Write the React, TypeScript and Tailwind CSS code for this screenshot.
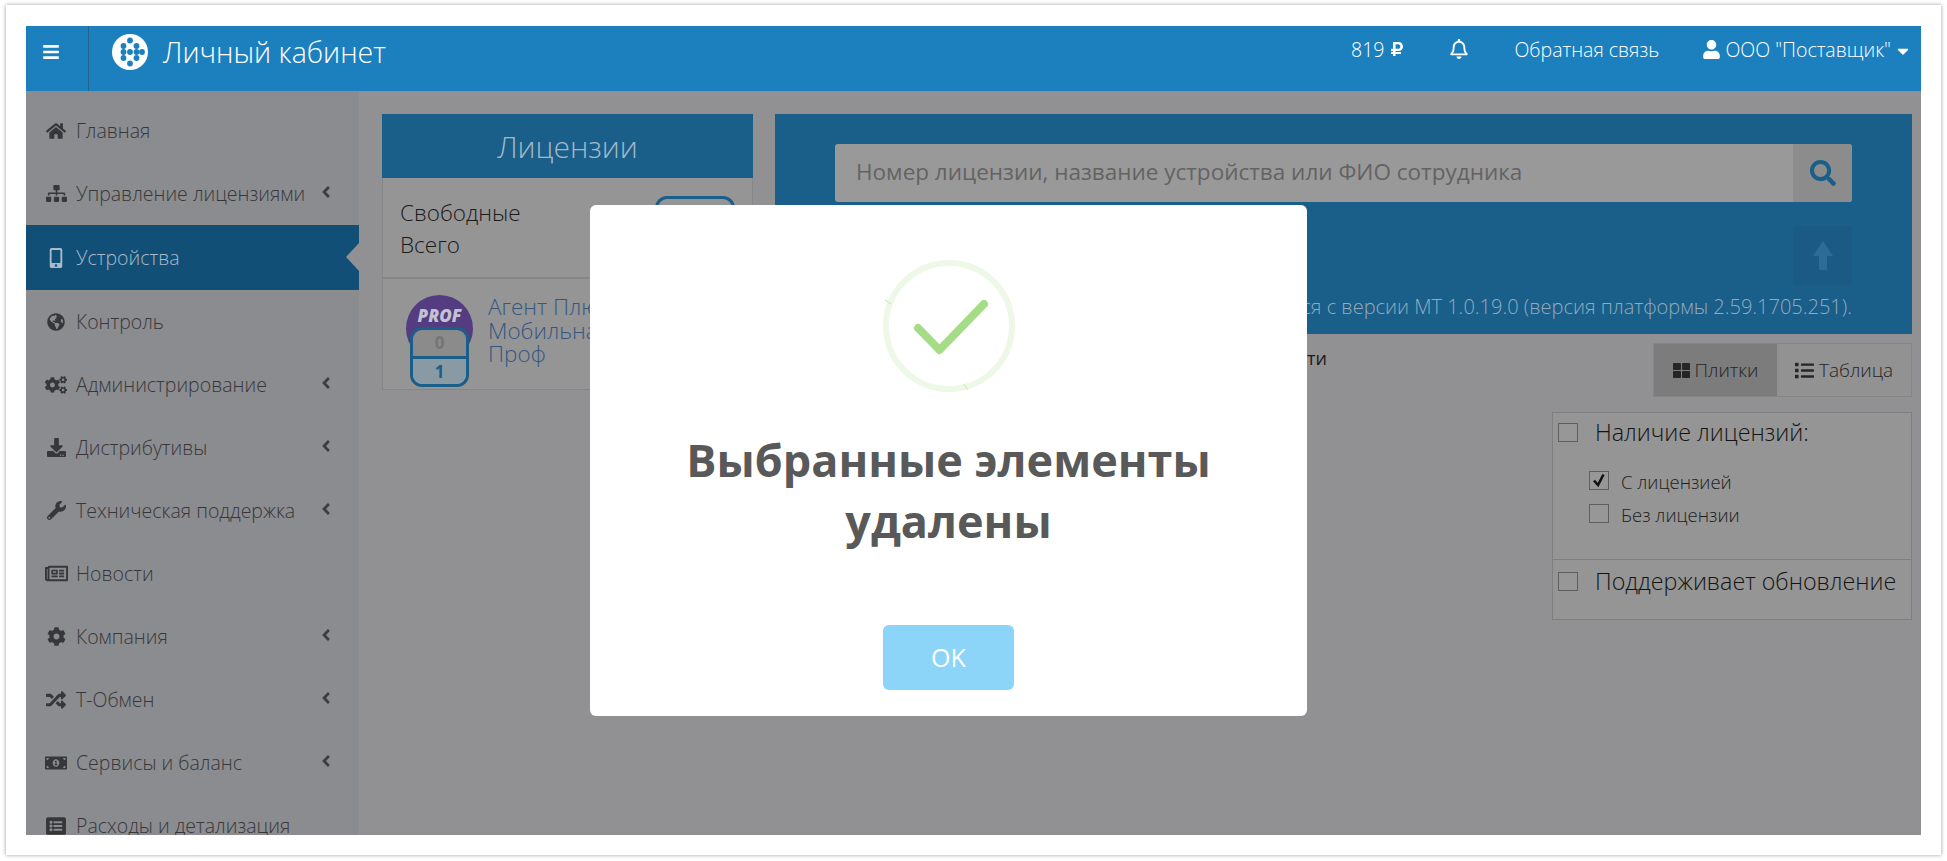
import type { ReactNode } from "react";
import {
  FaAngleLeft,
  FaBars,
  FaCaretDown,
  FaCog,
  FaCogs,
  FaDownload,
  FaGlobeAmericas,
  FaHome,
  FaList,
  FaListAlt,
  FaMobileAlt,
  FaMoneyBillAlt,
  FaRandom,
  FaRegBell,
  FaRegNewspaper,
  FaRubleSign,
  FaSearch,
  FaSitemap,
  FaThLarge,
  FaUser,
  FaWrench,
} from "react-icons/fa";

const menu = [
  { label: "Главная", icon: <FaHome size={20} /> },
  { label: "Управление лицензиями", icon: <FaSitemap size={21} />, more: true },
  { label: "Устройства", icon: <FaMobileAlt size={20} />, active: true },
  { label: "Контроль", icon: <FaGlobeAmericas size={18} /> },
  { label: "Администрирование", icon: <FaCogs size={22} />, more: true },
  { label: "Дистрибутивы", icon: <FaDownload size={19} />, more: true },
  { label: "Техническая поддержка", icon: <FaWrench size={19} />, more: true },
  { label: "Новости", icon: <FaRegNewspaper size={23} /> },
  { label: "Компания", icon: <FaCog size={19} />, more: true },
  { label: "Т-Обмен", icon: <FaRandom size={20} />, more: true },
  { label: "Сервисы и баланс", icon: <FaMoneyBillAlt size={22} />, more: true },
  { label: "Расходы и детализация", icon: <FaListAlt size={20} /> },
];

function Logo() {
  const dots = [
    [18, 6.5],
    [11.5, 12],
    [24.5, 12],
    [11.5, 18],
    [18, 18],
    [24.5, 18],
    [30, 18],
    [11.5, 24],
    [24.5, 24],
    [18, 29.5],
  ];
  return (
    <svg width="36" height="36" viewBox="0 0 36 36">
      <circle cx="18" cy="18" r="18" fill="#ffffff" />
      {dots.map(([cx, cy]) => (
        <circle key={`${cx}-${cy}`} cx={cx} cy={cy} r="2.9" fill="#1c80bf" />
      ))}
    </svg>
  );
}

function SuccessIcon() {
  return (
    <svg width="132" height="132" viewBox="0 0 132 132">
      <circle cx="66" cy="66" r="63" fill="none" stroke="#edf8e7" strokeWidth="6" />
      <path d="M2 40 L8 44" stroke="#c4e9ad" strokeWidth="1" />
      <path d="M81 124 L85 130" stroke="#c4e9ad" strokeWidth="1" />
      <path
        d="M35 68 L56.5 90 L101 44"
        fill="none"
        stroke="#a5dc86"
        strokeWidth="8"
        strokeLinecap="round"
        strokeLinejoin="round"
      />
    </svg>
  );
}

function UploadArrow() {
  return (
    <svg width="20" height="29" viewBox="0 0 20 29" fill="currentColor">
      <path d="M10 0 L20 15 L14 15 L14 29 L6 29 L6 15 L0 15 Z" />
    </svg>
  );
}

function Box({ checked, className = "" }: { checked?: boolean; className?: string }) {
  return (
    <span
      className={`relative block h-[19px] w-[20px] shrink-0 border border-[#5f5f60] bg-[#979797] ${className}`}
    >
      {checked && (
        <svg className="absolute top-0 left-0" width="18" height="17" viewBox="0 0 18 17">
          <path
            d="M4 8.5 L8 13 L13.5 2.5"
            fill="none"
            stroke="#111111"
            strokeWidth="2.6"
          />
        </svg>
      )}
    </span>
  );
}

function Filter({ title, children, className = "" }: { title: string; children?: ReactNode; className?: string }) {
  return (
    <div className={`border border-[#7f7f80] bg-[#959595] ${className}`}>
      <div className="flex items-center pl-[5px]">
        <Box />
        <span className="ml-[17px] text-[23.3px] leading-[26px] font-light whitespace-nowrap text-[#141414]">{title}</span>
      </div>
      {children}
    </div>
  );
}

function Header() {
  return (
    <header className="flex h-[65px] shrink-0 bg-[#1c80bf] text-white">
      <div className="flex w-[63px] items-start justify-center border-r border-[#24618c] pt-[17px]">
        <FaBars size={18} className="-ml-[12px]" />
      </div>
      <div className="ml-[23px] flex items-start pt-[8px]">
        <Logo />
        <span className="ml-[15px] text-[28.5px] leading-[36px] font-light">Личный кабинет</span>
      </div>
      <div className="ml-auto flex items-start pt-[11px] pr-[9px] text-[19.5px] leading-[26px] font-light">
        <span>819</span>
        <FaRubleSign size={16} className="mt-[4px] ml-[5px]" />
        <FaRegBell size={20} className="mt-[2px] ml-[44px]" />
        <span className="ml-[45px]">Обратная связь</span>
        <FaUser size={19} className="mt-[3px] ml-[43px]" />
        <span className="ml-[4px]">ООО "Поставщик"</span>
        <FaCaretDown size={18} className="mt-[5px] ml-[3px]" />
      </div>
    </header>
  );
}

function Sidebar() {
  return (
    <aside className="w-[333px] shrink-0 bg-[#8b8c8f] pt-[8.4px] text-[19.5px] font-light text-[#37373a]">
      {menu.map((item) => (
        <div
          key={item.label}
          className={`relative flex items-center gap-[6px] pl-[16px] ${item.active ? "h-[65px] bg-[#124f77] text-[#a9bac8]" : "h-[63px]"}`}
        >
          <span className="flex w-[28px] justify-center">{item.icon}</span>
          <span className="whitespace-nowrap">{item.label}</span>
          {item.more && (
            <FaAngleLeft size={18} className="absolute top-[21px] left-[291px] text-[#3d3d40]" />
          )}
          {item.active && (
            <span className="absolute top-[18px] right-0 h-0 w-0 border-y-[14px] border-r-[13px] border-y-transparent border-r-[#919193]" />
          )}
        </div>
      ))}
    </aside>
  );
}

function LicensesPanel() {
  return (
    <section className="w-[371px] shrink-0">
      <h2 className="flex h-[64px] items-center justify-center bg-[#1a5e8a] text-[30px] font-light text-[#a3b9c8]">
        Лицензии
      </h2>
      <div className="relative h-[101px] border-x border-b-2 border-[#868686] bg-[#959595] pt-[19px] pl-[17px] text-[22.5px] leading-[32px] font-light text-[#1a1a1a]">
        <p>Свободные</p>
        <p>Всего</p>
        <span className="absolute top-[18px] left-[272px] h-[60px] w-[80px] rounded-[12px] border-[3px] border-[#1a5e8a]" />
      </div>
      <div className="flex h-[111px] border-x border-b border-[#868686] bg-[#959595]">
        <div className="relative ml-[23px] h-[110px] w-[67px] shrink-0">
          <div className="mt-[16px] flex h-[67px] w-[67px] justify-center rounded-full bg-[#533c80] pt-[9px] text-[17px] leading-[24px] font-extrabold text-[#c5c1d2] italic">
            PROF
          </div>
          <div className="absolute top-[48px] left-[4px] flex h-[60px] w-[59px] flex-col overflow-hidden rounded-[12px] border-[3px] border-[#1a5e8a] text-center text-[17px] leading-[26px] font-bold">
            <span className="h-[29px] border-b-[3px] border-[#1a5e8a] bg-[#8b8b8b] text-[#757575]">0</span>
            <span className="flex-1 bg-[#8a9aa4] text-[#1a5e8a]">1</span>
          </div>
        </div>
        <p className="ml-[15px] pt-[16px] text-[22.5px] leading-[23.5px] font-light whitespace-nowrap text-[#35577f]">
          Агент Плюс:
          <br />
          Мобильная торговля
          <br />
          Проф
        </p>
      </div>
    </section>
  );
}

function SearchPanel() {
  return (
    <section className="h-[220px] bg-[#1a5e8a] px-[60px] pt-[30px]">
      <div className="flex h-[58px] overflow-hidden rounded-[3px] bg-[#999999]">
        <div className="flex flex-1 items-center pb-[2px] pl-[21px] text-[22.5px] text-[#636363]">
          Номер лицензии, название устройства или ФИО сотрудника
        </div>
        <div className="flex w-[59px] items-center justify-center bg-[#8c8c8c] text-[#1a5e8a]">
          <FaSearch size={26} />
        </div>
      </div>
      <div className="mt-[24px] flex justify-end">
        <div className="flex h-[59px] w-[59px] items-center justify-center rounded-[3px] bg-[#1b5a83] text-[#2c6c96]">
          <UploadArrow />
        </div>
      </div>
      <p className="mt-[9px] text-right text-[20px] leading-[26px] font-light whitespace-nowrap text-[#93acbd]">
        Загрузка поддерживается с версии МТ 1.0.19.0 (версия платформы 2.59.1705.251).
      </p>
    </section>
  );
}

function Toolbar() {
  return (
    <div className="mt-[9px] flex items-start justify-between">
      <p className="mt-[3px] w-[552px] text-right text-[18px] leading-[24px] text-[#1a1a1a]">
        Только совместимости
      </p>
      <div className="flex h-[54px] w-[259px] border border-[#868686] text-[19px] font-light text-[#262626]">
        <div className="flex w-[123px] items-center justify-center gap-[5px] bg-[#7c7c7c]">
          <FaThLarge size={17} />
          <span>Плитки</span>
        </div>
        <div className="flex flex-1 items-center justify-center gap-[5px] bg-[#929292]">
          <FaList size={19} />
          <span>Таблица</span>
        </div>
      </div>
    </div>
  );
}

function Filters() {
  return (
    <div className="mt-[15px] ml-auto w-[360px]">
      <Filter title="Наличие лицензий:" className="h-[148px] pt-[6px]">
        <div className="mt-[27px] ml-[36px] flex flex-col gap-[13px] text-[18.5px] leading-[20px] font-light text-[#1d1d1d]">
          <label className="flex items-center gap-[12px]">
            <Box checked className="-translate-y-[2px]" />
            С лицензией
          </label>
          <label className="flex items-center gap-[12px]">
            <Box className="-translate-y-[2px]" />
            Без лицензии
          </label>
        </div>
      </Filter>
      <Filter title="Поддерживает обновление" className="h-[60px] border-t-0 pt-[8px]" />
    </div>
  );
}

function Alert() {
  return (
    <div className="absolute top-[179px] left-[564px] flex h-[511px] w-[717px] flex-col items-center rounded-[6px] bg-white pt-[55px]">
      <SuccessIcon />
      <h1 className="mt-[37px] w-[600px] text-center text-[45px] leading-[61px] font-bold text-[#595959]">
        Выбранные элементы удалены
      </h1>
      <button className="mt-[74px] h-[65px] w-[131px] rounded-[6px] bg-[#8cd4f8] text-[25px] text-white">
        OK
      </button>
    </div>
  );
}

export default function App() {
  return (
    <div className="h-[861px] w-[1947px] overflow-hidden bg-white pt-[5px] pl-[6px] font-['Open_Sans',sans-serif]">
      <div className="h-[850px] w-[1935px] bg-white pt-[21px] pl-[20px] shadow-[0_0_4px_rgba(0,0,0,0.4)]">
        <div className="relative flex h-[809px] w-[1895px] flex-col overflow-hidden bg-[#919193]">
          <Header />
          <div className="flex min-h-0 flex-1">
            <Sidebar />
            <main className="min-w-0 flex-1 pt-[23px] pr-[9px] pl-[23px]">
              <div className="flex gap-[22px]">
                <LicensesPanel />
                <div className="min-w-0 flex-1">
                  <SearchPanel />
                  <Toolbar />
                  <Filters />
                </div>
              </div>
            </main>
          </div>
          <Alert />
        </div>
      </div>
    </div>
  );
}
